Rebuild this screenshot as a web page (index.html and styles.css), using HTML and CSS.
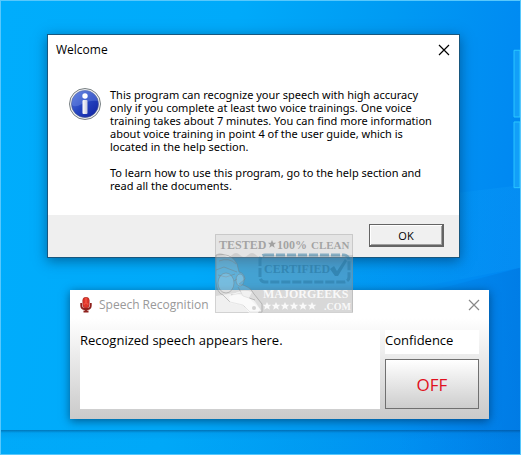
FILE: index.html
```html
<!DOCTYPE html>
<html lang="en">
<head>
    <meta charset="UTF-8">
    <meta name="viewport" content="width=device-width, initial-scale=1.0">
    <title>Speech Recognition</title>
    <link rel="stylesheet" href="styles.css">
</head>
<body>
    <main class="desktop">
        <!-- Wallpaper: light beams and the window logo -->
        <svg class="wallpaper" viewBox="0 0 521 455" preserveAspectRatio="none" aria-hidden="true">
            <defs>
                <linearGradient id="beam" x1="0" y1="0" x2="1" y2="0">
                    <stop offset="0" stop-color="#00b4ff" stop-opacity="0"/>
                    <stop offset="1" stop-color="#18a8fb" stop-opacity=".18"/>
                </linearGradient>
                <linearGradient id="shade" x1="0" y1="0" x2="1" y2="0">
                    <stop offset="0" stop-color="#0078dc" stop-opacity="0"/>
                    <stop offset="1" stop-color="#0070d8" stop-opacity=".4"/>
                </linearGradient>
            </defs>
            <path d="M300 212L521 185V268L300 310z" fill="url(#beam)"/>
            <path d="M400 299L521 268V455H400z" fill="url(#shade)"/>
            <path d="M515 49.500h6v67h-6zM515 121.500h6v66h-6z" fill="#129ff8" stroke="#2ac8ff"/>
        </svg>

        <section class="window welcome">
            <header class="title-bar">
                <h1 class="title">Welcome</h1>
                <button class="close" aria-label="Close">
                    <svg width="12" height="12" viewBox="0 0 12 12"><path d="M1 1l10 10M11 1L1 11"/></svg>
                </button>
            </header>
            <div class="message">
                <svg class="info-icon" width="32" height="32" viewBox="0 0 32 32" aria-hidden="true">
                    <defs>
                        <linearGradient id="info-blue" x1="0" y1="0" x2="1" y2="1">
                            <stop offset="0" stop-color="#5a7be0"/>
                            <stop offset=".5" stop-color="#2444c0"/>
                            <stop offset="1" stop-color="#1020a0"/>
                        </linearGradient>
                        <linearGradient id="info-stem" x1="0" y1="0" x2="1" y2="0">
                            <stop offset="0" stop-color="#fff"/>
                            <stop offset="1" stop-color="#c4c8dc"/>
                        </linearGradient>
                    </defs>
                    <circle cx="16" cy="16" r="15.500" fill="#f1f1f1" stroke="#777f83"/>
                    <circle cx="16" cy="16" r="13.500" fill="url(#info-blue)" stroke="#45568c" stroke-width=".6"/>
                    <path d="M3 17A13 13 0 0 1 29 13Q20 12 13 16T3 17z" fill="#8ba5f0" opacity=".3"/>
                    <circle cx="16" cy="8" r="2.700" fill="#fff"/>
                    <rect x="13.500" y="12" width="5" height="14" rx="1" fill="url(#info-stem)"/>
                </svg>
                <div class="message-text">
                    <p>This program can recognize your speech with high accuracy<br>
                    only if you complete at least two voice trainings. One voice<br>
                    training takes about 7 minutes. You can find more information<br>
                    about voice training in point 4 of the user guide, which is<br>
                    located in the help section.</p>
                    <p>To learn how to use this program, go to the help section and<br>
                    read all the documents.</p>
                </div>
            </div>
            <footer class="actions">
                <button class="ok">OK</button>
            </footer>
        </section>

        <section class="window speech">
            <header class="title-bar">
                <svg class="mic-icon" width="12" height="16" viewBox="0 0 12 16" aria-hidden="true">
                    <path d="M1.200 6v2.500q0 3 3 3.500h3.600q3-.5 3-3.500V6M6 12v3M3.500 14.500h5" fill="none" stroke="#8e211d" stroke-width="1.800"/>
                    <rect x="2.800" y=".3" width="6.400" height="10.700" rx="3" fill="#e0342a" stroke="#a0241e" stroke-width=".6"/>
                    <path d="M3.500 7h1.500M7 7h1.500M6 1v6" stroke="#ff7058" stroke-width=".8"/>
                </svg>
                <h2 class="title">Speech Recognition</h2>
                <button class="close" aria-label="Close">
                    <svg width="12" height="12" viewBox="0 0 12 12"><path d="M1 1l10 10M11 1L1 11"/></svg>
                </button>
            </header>
            <div class="panel">
                <textarea class="result" aria-label="Recognized speech" readonly>Recognized speech appears here.</textarea>
                <div class="side">
                    <output class="confidence">Confidence</output>
                    <button class="toggle">OFF</button>
                </div>
            </div>
        </section>

        <div class="taskbar"></div>

        <svg class="stamp" width="138" height="79" viewBox="0 0 138 79" role="img" aria-label="Tested 100% clean, certified, MajorGeeks.com">
            <rect x=".5" y=".5" width="137" height="78" fill="#c8c8c8" fill-opacity=".28" stroke="#999" stroke-opacity=".4"/>
            <path d="M1 21Q5 17 9 21T17 21T25 21T33 21T41 21T49 21L138 21V78H47L39 66 20 59 1 62z" fill="#777" fill-opacity=".2"/>
            <g class="stamp-grey">
                <text x="4" y="15" font-size="12">TESTED</text>
                <path d="M57 6l1.200 2.800h3l-2.400 1.900.9 3-2.700-1.800-2.700 1.800.9-3-2.400-1.900h3z"/>
                <text x="62" y="15" font-size="12">100%</text>
                <text x="96" y="15" font-size="11">CLEAN</text>
            </g>
            <g class="stamp-certified">
                <rect x="45" y="21" width="89" height="27" rx="5" fill="none" stroke-width="3" stroke-dasharray="9 2"/>
                <text x="49" y="39" font-size="12">CERTIFIED</text>
                <path d="M115 35l4-3 3 5 8-12 2 2-9 15h-3z"/>
            </g>
            <!-- Geek with goggles -->
            <g fill="#fff" fill-opacity=".15" stroke="#777" stroke-opacity=".4">
                <path d="M1 21Q16 18 22 30L24 38Q29 39 30 45L24 50Q35 52 39 60L47 70V78H35L28 71 15 68 8 61Q2 59 1 48z"/>
                <path d="M4 27Q14 23 21 30M1 36l8-3 13 5M3 41l8 2 9-3" fill="none"/>
                <ellipse cx="11" cy="49" rx="8" ry="10"/>
                <ellipse cx="25" cy="46" rx="4" ry="6"/>
                <path d="M19 47l3-2M16 61l11-2M23 53l5 9 12 4" fill="none"/>
            </g>
            <path d="M14 63Q25 54 37 58L34 64 45 75 43 79H34L29 72 15 69z" fill="#fff" fill-opacity=".6"/>
            <circle cx="39" cy="74" r="2" fill="#aaa" fill-opacity=".5"/>
            <g class="stamp-white">
                <text x="48" y="64" font-size="12">MAJORGEEKS</text>
                <text x="109" y="76" font-size="10">.COM</text>
                <path d="M52 68l1.300 2.700h3l-2.300 2 .8 3-2.800-1.700-2.800 1.700.8-3-2.300-2h3zM61 68l1.300 2.700h3l-2.300 2 .8 3-2.800-1.700-2.800 1.700.8-3-2.300-2h3zM70 68l1.300 2.700h3l-2.300 2 .8 3-2.800-1.700-2.800 1.700.8-3-2.300-2h3zM79 68l1.300 2.700h3l-2.300 2 .8 3-2.800-1.700-2.800 1.700.8-3-2.300-2h3zM88 68l1.300 2.700h3l-2.300 2 .8 3-2.800-1.700-2.800 1.700.8-3-2.300-2h3zM97 68l1.300 2.700h3l-2.300 2 .8 3-2.800-1.700-2.800 1.700.8-3-2.300-2h3z"/>
            </g>
        </svg>
    </main>
</body>
</html>
```
FILE: styles.css
```css
* {
    box-sizing: border-box;
}
body {
    margin: 0;
    font-family: "Open Sans", "Noto Sans", sans-serif;
    color: #000;
}
h1, h2, p {
    margin: 0;
    font-weight: normal;
}
button {
    font-family: inherit;
    padding: 0;
}
.desktop {
    position: relative;
    min-height: 100vh;
    overflow: hidden;
    border: 1px solid #58c8fc;
    background: linear-gradient(100deg, #00adfc 0%, #00aafa 40%, #009bf3 65%, #0089f2 90%, #0082ed 100%);
}
.wallpaper {
    position: absolute;
    inset: 0;
    width: 100%;
    height: 100%;
}

/* Windows on the desktop */
.window {
    position: absolute;
    background: #fff;
}
.title-bar {
    display: flex;
    align-items: center;
}
.title {
    flex: 1;
    font-size: 12px;
    line-height: 16px;
}
.close {
    display: flex;
    border: 0;
    background: none;
}
.close svg {
    fill: none;
    stroke: #000;
    stroke-width: 1.2;
}
.welcome {
    top: 33px;
    left: 46px;
    right: 60px;
    border: 1px solid #17577f;
    box-shadow: 0 3px 12px rgba(0, 35, 70, 0.5);
}
.welcome .title-bar {
    height: 30px;
    padding: 0 9px 0 8px;
}
.message {
    display: flex;
    gap: 9px;
    padding: 23px 20px 23px 21px;
}
.info-icon {
    flex: none;
}
.message-text {
    display: flex;
    flex-direction: column;
    gap: 13px;
    font-family: "Noto Sans", sans-serif;
    font-size: 11px;
    line-height: 13px;
    white-space: nowrap;
}
.actions {
    display: flex;
    justify-content: flex-end;
    padding: 9px 15px 10px;
    background: #efefef;
}
.ok {
    width: 75px;
    height: 23px;
    border: 1px solid #646464;
    border-right-width: 2px;
    border-bottom-width: 2px;
    background: #f0f0f0;
    box-shadow: inset 1px 1px #fff, inset -1px -1px #a0a0a0;
    font-size: 11px;
    color: #000;
}
.speech {
    top: 289px;
    left: 69px;
    right: 31px;
    padding-bottom: 10px;
    background: linear-gradient(#fff 0%, #fff 22%, #cacaca 100%);
    box-shadow: 0 2px 9px rgba(0, 35, 70, 0.6);
}
.speech .title-bar {
    gap: 7px;
    height: 29px;
    padding: 0 9px 0 10px;
}
.speech .title {
    color: #999;
}
.speech .close svg {
    stroke: #888;
}
.panel {
    display: flex;
    gap: 5px;
    padding: 11px 10px 0;
}
.result {
    flex: 1;
    min-width: 0;
    height: 79px;
    padding: 0;
    border: 0;
    outline: none;
    resize: none;
    background: #fff;
    font-family: inherit;
    font-size: 13px;
    line-height: 20px;
    color: #000;
}
.side {
    display: flex;
    flex-direction: column;
    gap: 5px;
    width: 94px;
}
.confidence {
    height: 24px;
    background: #fff;
    font-size: 13px;
    line-height: 20px;
}
.toggle {
    flex: 1;
    border: 1px solid #707070;
    background: linear-gradient(#fff, #cdcdcd);
    font-size: 17px;
    color: #e01020;
}
.taskbar {
    position: absolute;
    left: 0;
    right: 0;
    bottom: 0;
    height: 24px;
    background: linear-gradient(rgba(0, 65, 120, 0.5), rgba(0, 120, 200, 0.2) 3px, rgba(0, 150, 230, 0.1) 10px);
}

/* Stamp over both windows */
.stamp {
    position: absolute;
    top: 233px;
    left: 214px;
    font-family: "Liberation Serif", serif;
    font-weight: bold;
}
.stamp-grey {
    fill: #777;
    fill-opacity: 0.6;
}
.stamp-certified {
    fill: #2876a0;
    fill-opacity: 0.6;
    stroke: #2876a0;
    stroke-opacity: 0.5;
}
.stamp-certified text, .stamp-certified path {
    stroke: none;
}
.stamp-white {
    fill: #fff;
    fill-opacity: 0.85;
}
```
